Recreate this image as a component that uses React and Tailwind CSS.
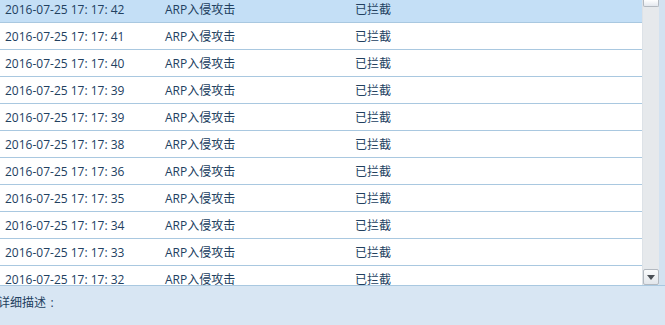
export default function App() {
  const times = ["42", "41", "40", "39", "39", "38", "36", "35", "34", "33", "32"]

  return (
    <div
      className="w-[665px] h-[325px] overflow-hidden bg-[#d8e6f3] text-[12px] text-[#22405f]"
      style={{ fontFamily: '"Open Sans", "Noto Sans CJK SC", sans-serif' }}
    >
      <div className="flex h-[286px] border-b border-[#a9c8e0]">
        {/* list */}
        <div className="w-[642px] overflow-hidden bg-white">
          <div className="-mt-[4px]">
            {times.map((s, i) => (
              <div
                key={i}
                className={`flex h-[27px] items-center border-b border-[#a9c8e0] pt-[1px] ${
                  i === 0 ? "bg-[#c4dff6]" : ""
                }`}
              >
                <span className="w-[165px] pl-[5px]">2016-07-25 17: 17: {s}</span>
                <span className="w-[190px]">ARP入侵攻击</span>
                <span>已拦截</span>
              </div>
            ))}
          </div>
        </div>

        {/* scrollbar */}
        <div className="flex w-[17px] flex-col justify-between bg-[#e6e9ec] border-l border-[#dde2e7]">
          <div className="h-[7px] w-[16px] rounded-b-[2px] border border-t-0 border-[#b3b9c0] bg-gradient-to-b from-[#ffffff] to-[#e4e8ee]" />
          <div className="flex h-[16px] w-[16px] items-center justify-center rounded-[2px] border border-[#b3b9c0] bg-gradient-to-b from-[#fafbfc] to-[#e2e6eb]">
            <svg width="8" height="5" viewBox="0 0 8 5">
              <path d="M0 0 H8 L4 5 Z" fill="#4a4f55" />
            </svg>
          </div>
        </div>
        <div className="flex-1 bg-[#d3e2f0]" />
      </div>

      <div className="-ml-[2px] flex pt-[8px]">
        <span>详细描述</span>
        <span className="inline-block w-[12px] text-center">:</span>
      </div>
    </div>
  )
}
